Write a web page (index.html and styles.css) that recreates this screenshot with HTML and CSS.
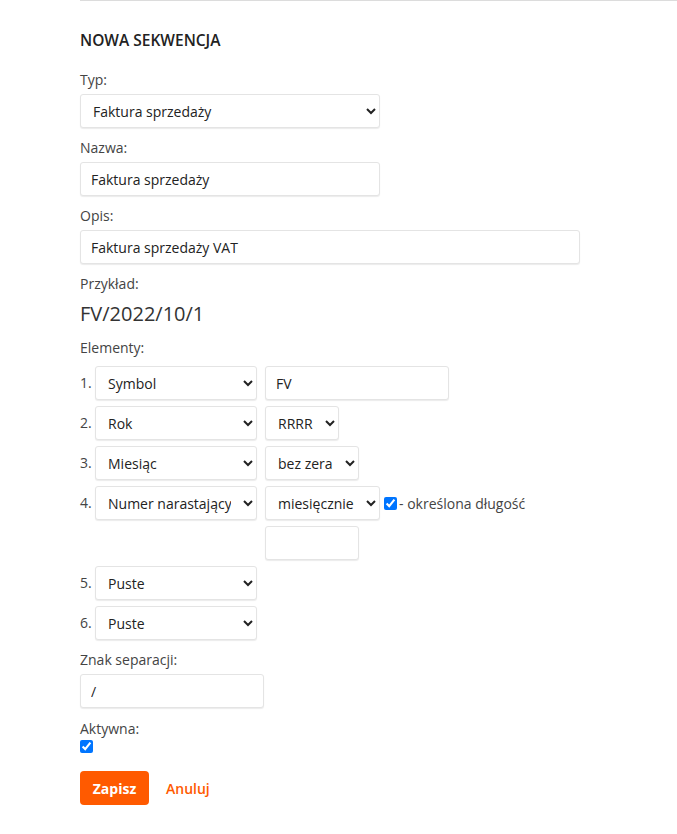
FILE: index.html
```html
<!DOCTYPE html>
<html lang="pl">
<head>
<meta charset="utf-8">
<title>Nowa sekwencja</title>
<link rel="stylesheet" href="styles.css">
</head>
<body>
<div class="page">
  <h1 class="title">NOWA SEKWENCJA</h1>

  <div class="field">
    <label class="lbl">Typ:</label>
    <select class="ctl w300"><option>Faktura sprzedaży</option></select>
  </div>

  <div class="field">
    <label class="lbl">Nazwa:</label>
    <input class="ctl w300" type="text" value="Faktura sprzedaży">
  </div>

  <div class="field">
    <label class="lbl">Opis:</label>
    <input class="ctl w500" type="text" value="Faktura sprzedaży VAT">
  </div>

  <div class="field">
    <label class="lbl">Przykład:</label>
    <div class="example">FV/2022/10/1</div>
  </div>

  <div class="field">
    <label class="lbl">Elementy:</label>
    <div class="rows">
      <div class="row">
        <span class="num">1.</span>
        <select class="ctl sel-main"><option>Symbol</option></select>
        <input class="ctl w184" type="text" value="FV">
      </div>
      <div class="row">
        <span class="num">2.</span>
        <select class="ctl sel-main"><option>Rok</option></select>
        <select class="ctl"><option>RRRR</option></select>
      </div>
      <div class="row">
        <span class="num">3.</span>
        <select class="ctl sel-main"><option>Miesiąc</option></select>
        <select class="ctl"><option>bez zera</option></select>
      </div>
      <div class="row">
        <span class="num">4.</span>
        <select class="ctl sel-main"><option>Numer narastający</option></select>
        <div class="col">
          <div class="line">
            <select class="ctl"><option>miesięcznie</option></select>
            <label class="chk"><input type="checkbox" checked> - określona długość</label>
          </div>
          <input class="ctl w94" type="text" value="">
        </div>
      </div>
      <div class="row">
        <span class="num">5.</span>
        <select class="ctl sel-main"><option>Puste</option></select>
      </div>
      <div class="row">
        <span class="num">6.</span>
        <select class="ctl sel-main"><option>Puste</option></select>
      </div>
    </div>
  </div>

  <div class="field">
    <label class="lbl">Znak separacji:</label>
    <input class="ctl w184" type="text" value="/">
  </div>

  <div class="field active">
    <label class="lbl">Aktywna:</label>
    <input class="active-chk" type="checkbox" checked>
  </div>

  <div class="actions">
    <button class="btn" type="button">Zapisz</button>
    <a class="cancel" href="#">Anuluj</a>
  </div>
</div>
</body>
</html>
```

FILE: styles.css
```css
html, body {
  margin: 0;
  background: #fff;
}
body {
  font-family: "Open Sans", "Liberation Sans", sans-serif;
  font-size: 14px;
  color: #333;
}
.page {
  margin-left: 80px;
  border-top: 1px solid #dcdcdc;
  padding-top: 29px;
}
.title {
  margin: 0 0 20px;
  font-size: 15.5px;
  line-height: 20px;
  font-weight: 600;
  color: #222;
}
.field {
  margin-bottom: 10px;
}
.lbl {
  display: block;
  line-height: 20px;
  margin-bottom: 4px;
  color: #444;
}
.ctl {
  box-sizing: border-box;
  height: 34px;
  border: 1px solid #e4e4e4;
  border-radius: 3px;
  box-shadow: 0 1px 1px rgba(0,0,0,0.08);
  background: #fff;
  font-family: "Open Sans", "Liberation Sans", sans-serif;
  font-size: 14px;
  color: #222;
  padding: 0 10px;
  margin: 0;
  outline: none;
}
select.ctl {
  padding: 0 9px 0 8px;
}
.w300 { width: 300px; }
.w500 { width: 500px; }
.w184 { width: 184px; }
.w94 { width: 94px; }
.sel-main { width: 162px; }
.example {
  font-size: 20px;
  line-height: 28px;
  color: #333;
  padding-top: 2px;
}
.rows {
  display: flex;
  flex-direction: column;
  gap: 6px;
  padding-top: 4px;
}
.row {
  display: flex;
  align-items: flex-start;
  gap: 8px;
}
.num {
  width: 15px;
  margin-right: -8px;
  line-height: 34px;
  color: #444;
}
.col {
  display: flex;
  flex-direction: column;
  gap: 6px;
}
.line {
  display: flex;
  align-items: center;
  gap: 4px;
}
.chk {
  display: flex;
  align-items: center;
  color: #444;
  white-space: nowrap;
}
.chk input {
  margin: 0 2px 0 0;
  width: 13px;
  height: 13px;
}
.active .lbl {
  padding-top: 1px;
  margin-bottom: 1px;
}
.active-chk {
  display: block;
  margin: 0;
  width: 13px;
  height: 13px;
}
.actions {
  display: flex;
  align-items: center;
  gap: 17px;
  margin-top: 18px;
}
.btn {
  height: 34px;
  width: 69px;
  border: none;
  border-radius: 4px;
  background: #ff5a00;
  color: #fff;
  font-family: "Open Sans", "Liberation Sans", sans-serif;
  font-weight: 700;
  font-size: 14px;
  padding: 0;
}
.cancel {
  color: #ff5a00;
  text-decoration: none;
  font-size: 14px;
  font-weight: 600;
}
```
